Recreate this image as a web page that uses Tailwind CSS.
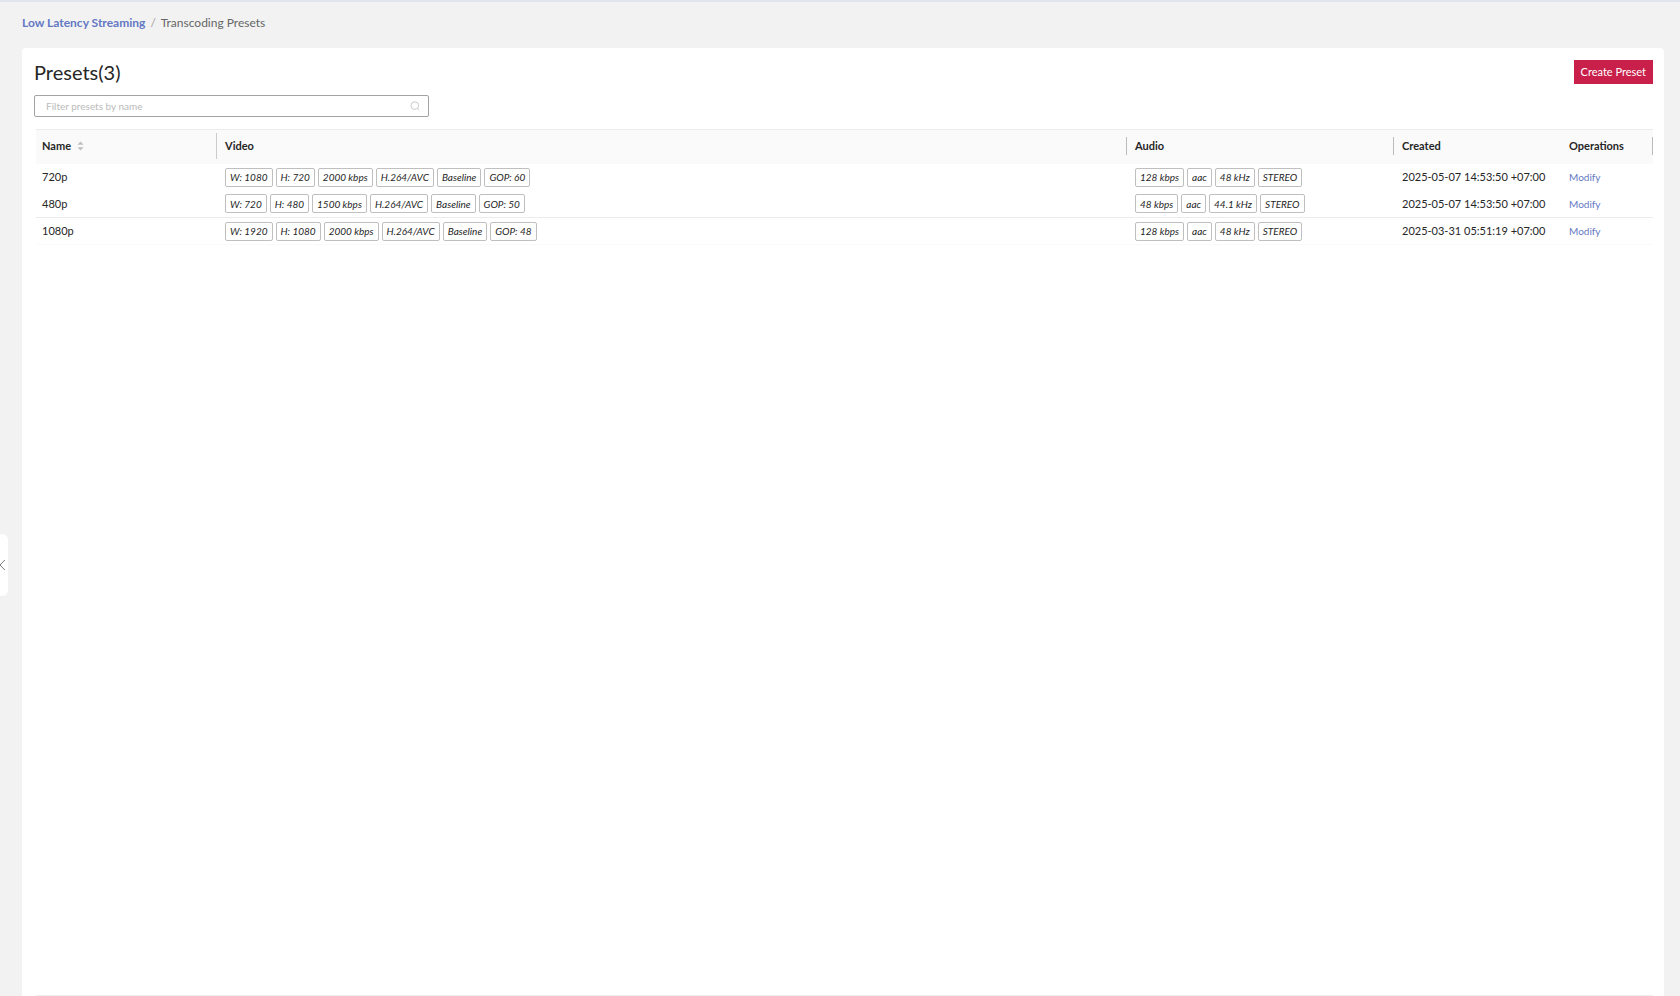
<!DOCTYPE html>
<html lang="en">
<head>
    <meta charset="UTF-8">
    <meta name="viewport" content="width=device-width, initial-scale=1.0">
    <title>Transcoding Presets | Low Latency Streaming</title>
    <script src="https://cdn.jsdelivr.net/npm/@tailwindcss/browser@4"></script>
</head>
<body class="bg-[#f2f2f2] text-[#262626] font-['Lato','Open_Sans',sans-serif]">
    <div class="relative min-h-screen flex flex-col border-t-2 border-[#e1e5ee] pl-[22px] pr-4">

        <!-- Sidebar toggle -->
        <button type="button" aria-label="Toggle sidebar" class="absolute left-0 top-[532px] w-2 h-[62px] bg-white rounded-r-md flex items-center overflow-hidden">
            <svg class="w-[5px] h-3 shrink-0" viewBox="0 0 5 12" fill="none" stroke="#777" stroke-width="1"><path d="M4.8 1L0 6l4.8 5"/></svg>
        </button>

        <!-- Breadcrumb -->
        <nav aria-label="Breadcrumb" class="h-[46px] pt-[13px] flex items-start text-[12px] leading-4">
            <a href="#" class="font-bold text-[#6478c4]">Low Latency Streaming</a>
            <span class="mx-[5px] text-[#a0a0a0]">/</span>
            <span class="text-[#666]">Transcoding Presets</span>
        </nav>

        <!-- Presets card -->
        <main class="flex-1 flex flex-col bg-white rounded-t-sm pt-3 pl-3 pr-[11px]">
            <div class="flex items-center justify-between">
                <h1 class="text-[20px] leading-6">Presets(3)</h1>
                <button type="button" class="h-6 px-[7px] bg-[#c9204b] text-white text-[11px] leading-4">Create Preset</button>
            </div>

            <div class="mt-[11px] w-[395px] max-w-full h-[22px] flex items-center border border-[#a3a3a3] rounded-xs pl-[11px] pr-2">
                <input type="text" aria-label="Filter presets by name" placeholder="Filter presets by name" class="flex-1 min-w-0 text-[10px] leading-4 outline-none placeholder:text-[#bbb]">
                <svg class="w-[10px] h-[10px]" viewBox="0 0 10 10" fill="none" stroke="#bdbdbd" stroke-width="0.8"><circle cx="4.8" cy="4.6" r="3.8"/><path d="M7.6 7.4L9.4 9.2"/></svg>
            </div>

            <div class="mt-3 ml-[2px] flex-1 border-b border-[#f0f0f2]">
                <table class="w-full table-fixed border-collapse text-left text-[11px] leading-4">
                    <colgroup>
                        <col class="w-[181px]">
                        <col>
                        <col class="w-[267px]">
                        <col class="w-[167px]">
                        <col class="w-[92px]">
                    </colgroup>
                    <thead class="bg-[#fafafa] border-t border-[#ececec]">
                        <tr class="h-[34px]">
                            <th class="p-0 pb-[2px] font-bold">
                                <div class="flex items-center h-[26px] pl-[6px] border-r border-[#ccc]">
                                    Name
                                    <svg class="ml-[6px] w-[7px] h-[10px]" viewBox="0 0 7 10" fill="#bfbfbf"><path d="M3.5 0.4L6.6 3.8H0.4z"/><path d="M3.5 9.6L0.4 6.2H6.6z"/></svg>
                                </div>
                            </th>
                            <th class="p-0 pb-[2px] font-bold"><div class="flex items-center h-[18px] pl-2 border-r border-[#bbb]">Video</div></th>
                            <th class="p-0 pb-[2px] font-bold"><div class="flex items-center h-[18px] pl-2 border-r border-[#bbb]">Audio</div></th>
                            <th class="p-0 pb-[2px] font-bold"><div class="flex items-center h-[18px] pl-2">Created</div></th>
                            <th class="p-0 pb-[2px] font-bold"><div class="flex items-center h-[18px] pl-2 border-r border-[#bbb]">Operations</div></th>
                        </tr>
                    </thead>
                    <tbody id="presetRows"></tbody>
                </table>
            </div>
        </main>
    </div>

    <script>
        const presets = [
            { name: '720p', video: ['W: 1080', 'H: 720', '2000 kbps', 'H.264/AVC', 'Baseline', 'GOP: 60'], audio: ['128 kbps', 'aac', '48 kHz', 'STEREO'], created: '2025-05-07 14:53:50 +07:00', border: '' },
            { name: '480p', video: ['W: 720', 'H: 480', '1500 kbps', 'H.264/AVC', 'Baseline', 'GOP: 50'], audio: ['48 kbps', 'aac', '44.1 kHz', 'STEREO'], created: '2025-05-07 14:53:50 +07:00', border: 'border-b border-[#ebebeb]' },
            { name: '1080p', video: ['W: 1920', 'H: 1080', '2000 kbps', 'H.264/AVC', 'Baseline', 'GOP: 48'], audio: ['128 kbps', 'aac', '48 kHz', 'STEREO'], created: '2025-03-31 05:51:19 +07:00', border: 'border-b border-[#fafafa]' }
        ];

        function renderTags(tags) {
            return tags.map(tag => `<span class="h-[19px] px-1 flex items-center border border-[#bfbfbf] rounded-xs text-[10px] leading-4 italic whitespace-nowrap">${tag}</span>`).join('');
        }

        document.getElementById('presetRows').innerHTML = presets.map(preset => `
            <tr class="h-[27px] ${preset.border}">
                <td class="p-0 pl-[6px]">${preset.name}</td>
                <td class="p-0 pl-2"><div class="flex gap-[3px]">${renderTags(preset.video)}</div></td>
                <td class="p-0 pl-2"><div class="flex gap-[3px]">${renderTags(preset.audio)}</div></td>
                <td class="p-0 pl-2 whitespace-nowrap">${preset.created}</td>
                <td class="p-0 pl-2"><a href="#" class="text-[10px] text-[#6478c4]">Modify</a></td>
            </tr>
        `).join('');
    </script>
</body>
</html>
